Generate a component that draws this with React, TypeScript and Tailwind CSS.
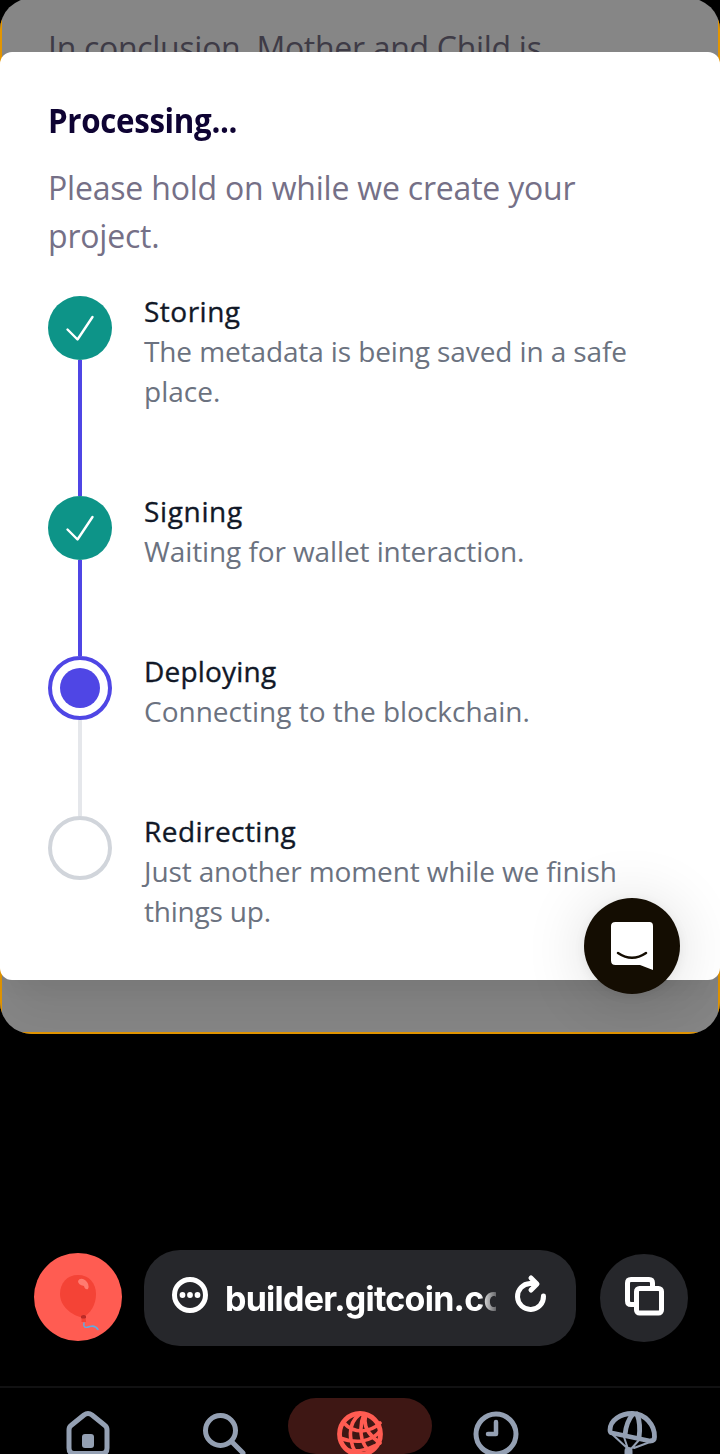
import React from "react";

type StepState = "done" | "current" | "upcoming";

interface Step {
  title: string;
  lines: { text: string; className: string }[];
  titleClass: string;
  state: StepState;
  height: string;
}

const steps: Step[] = [
  {
    title: "Storing",
    titleClass: "tracking-[0.5px]",
    lines: [
      { text: "The metadata is being saved in a safe", className: "tracking-[-0.11px]" },
      { text: "place.", className: "tracking-[0px]" },
    ],
    state: "done",
    height: "h-[200px]",
  },
  {
    title: "Signing",
    titleClass: "tracking-[0.65px]",
    lines: [{ text: "Waiting for wallet interaction.", className: "tracking-[-0.1px]" }],
    state: "done",
    height: "h-[160px]",
  },
  {
    title: "Deploying",
    titleClass: "tracking-[0.2px]",
    lines: [{ text: "Connecting to the blockchain.", className: "tracking-[0px]" }],
    state: "current",
    height: "h-[160px]",
  },
  {
    title: "Redirecting",
    titleClass: "tracking-[0.45px]",
    lines: [
      { text: "Just another moment while we finish", className: "tracking-[-0.13px]" },
      { text: "things up.", className: "tracking-[-0.2px]" },
    ],
    state: "upcoming",
    height: "h-[120px]",
  },
];

function StepMarker({ state }: { state: StepState }) {
  if (state === "done") {
    return (
      <div className="flex size-16 shrink-0 items-center justify-center rounded-full bg-[#0d9488]">
        <svg width="64" height="64" viewBox="0 0 64 64" fill="none" stroke="#fff" strokeWidth="2.4" strokeLinecap="round" strokeLinejoin="round">
          <path d="M19.500 33.500 29.500 43.500 44.500 21" />
        </svg>
      </div>
    );
  }
  if (state === "current") {
    return (
      <div className="flex size-16 shrink-0 items-center justify-center rounded-full border-4 border-[#4f46e5] bg-white">
        <div className="size-10 rounded-full bg-[#4f46e5]" />
      </div>
    );
  }
  return <div className="size-16 shrink-0 rounded-full border-4 border-[#d1d5db] bg-white" />;
}

function StepRow({ step, last }: { step: Step; last: boolean }) {
  return (
    <li className={`flex gap-8 ${step.height}`}>
      <div className="flex w-16 flex-col items-center">
        <StepMarker state={step.state} />
        {!last && <div className={`w-1 grow ${step.state === "done" ? "bg-[#4f46e5]" : "bg-[#e5e7eb]"}`} />}
      </div>
      <div className="-mt-[5px] text-[28px] leading-10 whitespace-nowrap">
        <div className={`text-[#111827] [-webkit-text-stroke:0.35px_#111827] ${step.titleClass}`}>{step.title}</div>
        {step.lines.map((l) => (
          <div key={l.text} className={`text-[#6b7280] ${l.className}`}>{l.text}</div>
        ))}
      </div>
    </li>
  );
}

function ChatLauncher() {
  return (
    <div className="absolute top-[900px] left-[584px] flex size-24 items-center justify-center rounded-full bg-[#140d02] shadow-[0_2px_12px_rgba(0,0,0,0.06),0_4px_64px_rgba(0,0,0,0.14)]">
      <svg width="96" height="96" viewBox="0 0 96 96">
        <path fill="#fff" d="M31.500 24H65.500Q69 24 69 28V72L56 67H31.500Q27 67 27 62.500V28Q27 24 31.500 24Z" />
        <path d="M34 55Q48 64.500 62 55" fill="none" stroke="#140d02" strokeWidth="2.500" strokeLinecap="round" />
      </svg>
    </div>
  );
}

function Balloon() {
  return (
    <svg width="88" height="88" viewBox="0 0 88 88" fill="none">
      <path d="M44 22C33 22 26 30 26 41C26 53 37 62 48 64.500C57 61 62 51 62 41C62 30 55 22 44 22Z" fill="#f44336" />
      <path d="M44 28Q46 24 51 27Q56 31 54 36Q51 37 50 33Q44 32 44 28Z" fill="#ff7b70" />
      <path d="M47.500 63H51.500L52 69H47.500Z" fill="#f44336" />
      <path d="M47 63Q50 61 52 63V65Q49 66 47 65Z" fill="#b92b27" />
      <path d="M50 70C49 75 52 75 56 73.500Q61 72 64 76.500" stroke="#64a9e0" strokeWidth="1.500" strokeLinecap="round" />
    </svg>
  );
}

function AddressBar() {
  return (
    <div className="flex h-24 items-center pr-8 pl-[34px]">
      <div className="mt-[-2px] size-[88px] rounded-full bg-[#ff5c52]"><Balloon /></div>
      <div className="ml-[22px] flex h-24 w-[432px] items-center rounded-[36px] bg-[#26272b]">
        <svg className="ml-[27px] -mt-[6px]" width="38" height="38" viewBox="0 0 38 38" fill="none">
          <circle cx="19" cy="19" r="15.500" stroke="#fff" strokeWidth="5" />
          <g fill="#fff"><circle cx="11.500" cy="19" r="2.900" /><circle cx="19" cy="19" r="2.900" /><circle cx="26.500" cy="19" r="2.900" /></g>
        </svg>
        <div className="mt-[2px] ml-4 w-[271px] overflow-hidden whitespace-nowrap text-[34px] leading-[44px] font-bold tracking-[-0.75px] text-white [font-family:Inter,sans-serif] [mask-image:linear-gradient(to_right,#000_94%,rgba(0,0,0,0.3))]">
          builder.gitcoin.co
        </div>
        <svg className="ml-[18px] -mt-2" width="34" height="40" viewBox="0 0 34 40" fill="none" stroke="#fff" strokeWidth="5" strokeLinecap="round" strokeLinejoin="round">
          <path d="M29.500 22A13 13 0 1 1 16 9.500H22M17 4L23 10 17 16" />
        </svg>
      </div>
      <div className="ml-6 flex size-[88px] items-center justify-center rounded-full bg-[#26272b]">
        <svg width="88" height="88" viewBox="0 0 88 88" fill="none" stroke="#fff" strokeWidth="5">
          <path d="M36.500 50.500H31Q27.500 50.500 27.500 47V29Q27.500 25.500 31 25.500H49Q52.500 25.500 52.500 29V34" />
          <rect x="36.500" y="34.500" width="25" height="24.500" rx="3" />
        </svg>
      </div>
    </div>
  );
}

function BottomNav() {
  return (
    <nav className="flex h-[68px] gap-1 overflow-hidden border-t-2 border-[#111112] px-4 pt-[10px] text-[#94a0b3]">
      <div className="w-36">
        <svg width="144" height="72" viewBox="16 1398 144 72" fill="none" stroke="currentColor" strokeWidth="5" strokeLinejoin="round">
          <path d="M69 1430Q69 1427 71 1425.500L84 1415Q88 1412 92 1415L105 1425.500Q107 1427 107 1430V1448Q107 1453.500 102 1453.500H74Q69 1453.500 69 1448Z" />
          <rect x="82" y="1434" width="12" height="14" rx="3" fill="currentColor" stroke="none" />
        </svg>
      </div>
      <div className="-ml-[16px] w-36">
        <svg width="144" height="72" viewBox="148 1398 144 72" fill="none" stroke="currentColor" strokeWidth="5" strokeLinecap="round">
          <circle cx="220.500" cy="1430.500" r="15" /><path d="M231.500 1441.500 243 1453" />
        </svg>
      </div>
      <div className="-ml-2 w-36 rounded-[36px] bg-[#3e1714]">
        <svg width="144" height="72" viewBox="288 1398 144 72" fill="none" stroke="#ff5c52" strokeWidth="3.600" strokeLinecap="round">
          <circle cx="360" cy="1434" r="20.500" strokeWidth="4.800" />
          <path d="M360 1414Q348 1423 351 1440Q352 1447 356 1453M364 1414Q359 1426 362 1439Q364 1446 369 1451M366 1415Q361 1430 380 1443" />
          <path d="M344 1423Q351 1431 362 1431Q373 1430 380 1423M340 1438Q350 1442 362 1441Q374 1439 380 1431M348 1450Q360 1453 374 1446" />
        </svg>
      </div>
      <div className="-ml-3 w-36">
        <svg width="144" height="72" viewBox="424 1398 144 72" fill="none" stroke="currentColor" strokeWidth="5">
          <circle cx="496" cy="1434" r="20" /><path d="M496 1422V1434H488" strokeWidth="4.500" strokeLinecap="round" strokeLinejoin="round" />
        </svg>
      </div>
      <div className="-ml-3 w-36">
        <svg width="144" height="72" viewBox="560 1398 144 72" fill="none" stroke="currentColor" strokeWidth="4.800" strokeLinecap="round" strokeLinejoin="round">
          <path d="M610 1430C610 1420 621 1413.500 632 1413.500C645 1413.500 655 1425 654.500 1437Q654.500 1441 650 1441L612 1433Q610 1432.500 610 1430Z" />
          <path d="M633 1414Q626 1422 625 1435M637 1414Q641 1424 639 1438" />
          <path d="M613 1435 626 1447M624 1437 628 1449M639 1440 631 1449M650 1442 634 1448" strokeWidth="2" />
          <path d="M628.500 1451V1458" strokeWidth="8" />
        </svg>
      </div>
    </nav>
  );
}

export default function App() {
  return (
    <main className="h-[1454px] w-[720px] overflow-hidden bg-black [font-family:'Open_Sans','Noto_Sans',sans-serif]">
      <section className="relative -mt-[2px] h-[1036px] overflow-hidden rounded-[32px]">
        <div className="h-full border-2 border-[#e39500] bg-[#868686]">
          <p className="h-[52px] overflow-hidden pt-6 pl-[46px] text-[32px] leading-[48px] tracking-[-0.3px] whitespace-nowrap text-[#3e3b46]">In conclusion, Mother and Child is</p>
          <div className="-mx-[2px] h-[928px] rounded-xl bg-white px-12 pt-12 shadow-[0_40px_50px_-10px_rgba(0,0,0,0.07),0_16px_20px_-8px_rgba(0,0,0,0.04)]">
            <h1 className="-mt-[2px] origin-left scale-x-[0.92] text-[34px] leading-[44px] font-bold tracking-[-0.35px] text-[#0e0333]">Processing...</h1>
            <p className="mt-[22px] text-[32px] leading-[48px] tracking-[-0.2px] whitespace-nowrap text-[#757087]">
              Please hold on while we create your<br />project.
            </p>
            <ol className="mt-9">
              {steps.map((s, i) => <StepRow key={s.title} step={s} last={i === steps.length - 1} />)}
            </ol>
          </div>
        </div>
        <ChatLauncher />
      </section>
      <footer className="pt-[216px]">
        <AddressBar />
        <div className="h-10" />
        <BottomNav />
      </footer>
    </main>
  );
}
